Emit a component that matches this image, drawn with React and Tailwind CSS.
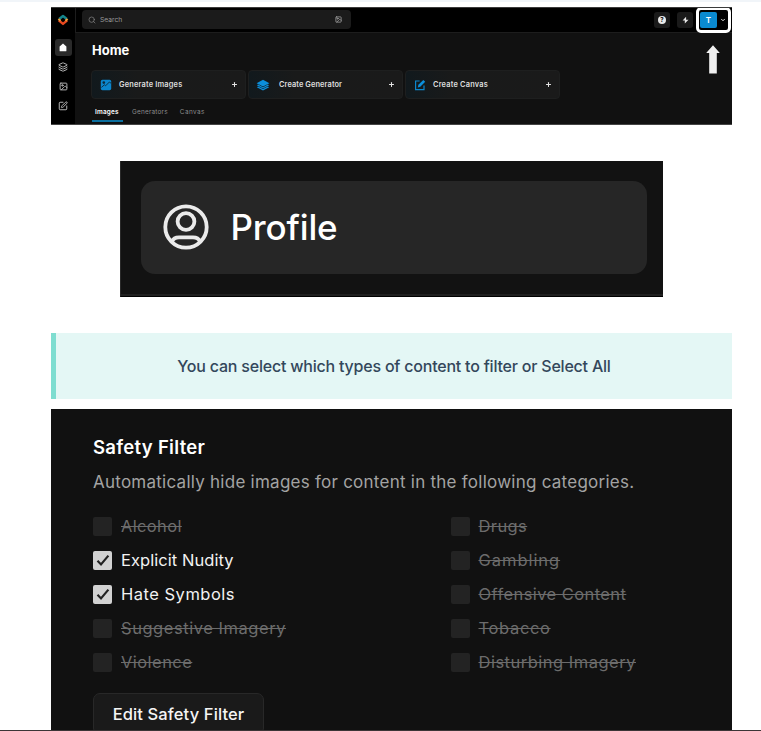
import React from 'react';
import { Search, Image, Layers, Plus, ChevronDown, SquarePen } from 'lucide-react';

const CATEGORIES = [
    [
        { label: 'Alcohol', tracking: 'tracking-[0.35px]' },
        { label: 'Explicit Nudity', checked: true, tracking: 'tracking-[0.06px]' },
        { label: 'Hate Symbols', checked: true, tracking: 'tracking-[0.5px]' },
        { label: 'Suggestive Imagery', tracking: 'tracking-[0.55px]' },
        { label: 'Violence', tracking: 'tracking-[0.45px]' },
    ],
    [
        { label: 'Drugs', tracking: 'tracking-[0.4px]' },
        { label: 'Gambling', tracking: 'tracking-[0.95px]' },
        { label: 'Offensive Content', tracking: 'tracking-[0.42px]' },
        { label: 'Tobacco', tracking: 'tracking-[0.65px]' },
        { label: 'Disturbing Imagery', tracking: 'tracking-[0.5px]' },
    ],
];

function Logo() {
    return (
        <svg width="12" height="12" viewBox="0 0 12 12" fill="none" strokeWidth="2.4" strokeLinejoin="round">
            <path d="M2.2 5 6 2l3.8 3" stroke="#14868c" />
            <path d="M1.8 6.4 6 9.9l4.2-3.5" stroke="#e8481f" />
            <path d="M1.4 4.9 3.6 6.7" stroke="#f2a03a" strokeWidth="2" />
            <path d="M10.6 4.9 8.4 6.7" stroke="#f2a03a" strokeWidth="2" />
        </svg>
    );
}

function HomeIcon() {
    return (
        <svg width="8" height="9" viewBox="0 0 8 9" fill="#fff">
            <path d="M4 .5 7.4 3.4V7.7a.5.5 0 0 1-.5.5H1.1a.5.5 0 0 1-.5-.5V3.4Z" />
        </svg>
    );
}

function ImageTile() {
    return (
        <svg width="12" height="12" viewBox="0 0 12 12">
            <rect x=".8" y=".8" width="10.4" height="10.4" rx="1.6" fill="#0b86cd" />
            <circle cx="3.8" cy="3.6" r="1.3" fill="#0f2a3a" />
            <path d="M1.4 8.4 4.4 5.8l1.2 1L9.4 3l1.6 1.2" stroke="#0f2a3a" strokeWidth=".9" fill="none" />
        </svg>
    );
}

function LayersTile() {
    return (
        <svg width="14" height="12" viewBox="0 0 14 12" fill="#0b8fdc">
            <path d="M7 .8 13.4 4.2 7 7.6.6 4.2Z" />
            <path d="M.8 6.3 2.2 5.6 7 8.2l4.8-2.6 1.4.7L7 9.6Z" />
            <path d="M.8 8.2 2.2 7.5 7 10l4.8-2.5 1.4.7L7 11.4Z" />
        </svg>
    );
}

function EditTile() {
    return (
        <svg width="12" height="12" viewBox="0 0 12 12" fill="none">
            <path d="M5.6 2H1.6v8.6h8.4V6.6" stroke="#0b86cd" strokeWidth="1.2" />
            <path d="M3.8 8.4 4.4 5.8 9.3.9l1.9 1.9-4.9 4.9Z" fill="#0b8fdc" />
        </svg>
    );
}

function ProfileIcon() {
    return (
        <svg className="-mt-[2px]" width="46" height="46" viewBox="0 0 46 46" fill="none" stroke="#ebebeb" strokeWidth="3.8">
            <circle cx="23" cy="23" r="20.7" />
            <circle cx="23" cy="17.5" r="8.4" />
            <path d="M9 37.5c1.2-3 3.6-4.1 7-4.1h14c3.4 0 5.8 1.1 7 4.1" />
        </svg>
    );
}

function ActionCard({ icon, label, spacing }) {
    return (
        <div className="flex h-[29px] w-[155px] items-center rounded-[4px] border border-[#1e1f1f] bg-linear-to-r from-[#11191d] via-[#191a1a] via-30% to-[#1a1a1a] pr-[7px] pl-[7px]">
            <div className="flex w-[14px] justify-center">{icon}</div>
            <span className={`flex-1 text-[7.4px] leading-none font-semibold whitespace-nowrap text-[#dedede] ${spacing}`}>{label}</span>
            <Plus size={7} strokeWidth={3.5} color="#e5e5e5" />
        </div>
    );
}

function Dashboard() {
    return (
        <div className="flex h-[118px] w-[681px] overflow-hidden border-t border-b border-t-[#3b3b3b] border-b-[#444] bg-[#111]">
            <aside className="flex w-6 flex-col items-center bg-black">
                <div className="flex h-[23px] items-center">
                    <Logo />
                </div>
                <div className="mt-[8px] flex h-[17px] w-[17px] items-center justify-center rounded-[3px] bg-[#2a2a2a]">
                    <HomeIcon />
                </div>
                <Layers className="mt-[6px]" size={10} strokeWidth={2.4} color="#b5b5b5" />
                <Image className="mt-[10px]" size={9} strokeWidth={2.6} color="#b5b5b5" />
                <SquarePen className="mt-[10px]" size={10} strokeWidth={2.4} color="#b5b5b5" />
            </aside>

            <div className="flex flex-1 flex-col">
                <header className="flex h-[25px] items-start border-b border-l border-[#1d1d1d] bg-black pt-[2px] pl-[6px]">
                    <div className="flex h-[19px] w-[269px] items-center rounded-[4px] bg-[#1b1b1b] pr-[9px] pl-[6px]">
                        <Search size={8} color="#8a8a8a" />
                        <span className="ml-1 flex-1 text-[6.7px] leading-[8px] text-[#989898]">Search</span>
                        <Image size={7} strokeWidth={2.6} color="#a5a5a5" />
                    </div>
                    <div className="mt-[2px] ml-auto flex h-4 w-4 items-center justify-center rounded-[3px] bg-[#1a1a1a]">
                        <span className="flex h-2 w-2 items-center justify-center rounded-full bg-[#e8e8e8] text-[6px] leading-none font-bold text-black">?</span>
                    </div>
                    <div className="mt-[2px] ml-[7px] flex h-4 w-4 items-center justify-center rounded-[3px] bg-[#1a1a1a]">
                        <svg width="7" height="8" viewBox="0 0 7 8" fill="#e8e8e8">
                            <path d="M4.1.8.6 4.6h2.2v2.8L6.5 3.7H4.1Z" />
                        </svg>
                    </div>
                    <div className="relative -mt-[3px] mr-px ml-[3px] flex h-[26px] w-[35px] shrink-0 items-center rounded-[5px] border-[3px] border-white bg-black pl-px">
                        <div className="flex h-4 w-[17px] items-center justify-center rounded-[2px] bg-[#0a8ad0] text-[8px] leading-none font-semibold text-white">T</div>
                        <ChevronDown className="ml-[3px]" size={6} strokeWidth={3.5} color="#fff" />
                    </div>
                </header>

                <main className="flex flex-1 justify-between pl-4">
                    <div>
                        <h1 className="mt-[9px] ml-px text-[13px] leading-4 font-bold text-white">Home</h1>
                        <div className="mt-[12px] flex gap-[2px]">
                            <ActionCard icon={<ImageTile />} label="Generate Images" spacing="ml-[6px] tracking-[0.18px]" />
                            <ActionCard icon={<LayersTile />} label="Create Generator" spacing="ml-[9px] tracking-[0.1px]" />
                            <ActionCard icon={<EditTile />} label="Create Canvas" spacing="ml-[6px] tracking-[0.2px]" />
                        </div>
                        <nav className="mt-[5px] flex h-[18px] gap-[9px] text-[6.4px] leading-[16px] tracking-[0.22px] text-[#8c8c8c]">
                            <span className="ml-px w-[31px] border-b-2 border-[#0a6f9f] pl-[3px] font-semibold text-white">Images</span>
                            <span>Generators</span>
                            <span className="ml-[3px] tracking-[0.4px]">Canvas</span>
                        </nav>
                    </div>
                    <svg className="mt-[12px] mr-[12px]" width="14" height="30" viewBox="0 0 14 30" fill="#f0f0f0">
                        <path d="M7 .3 13.8 8H10.8V28.6H3.2V8H.2Z" />
                    </svg>
                </main>
            </div>
        </div>
    );
}

function ProfilePanel() {
    return (
        <div className="mt-9 h-[136px] w-[543px] border-b border-l border-b-black border-l-[#2a2a2a] bg-[#121212]">
            <div className="h-[135px] border-b-2 border-[#202020] pt-5 pl-5">
                <div className="flex h-[93px] w-[506px] items-center rounded-[14px] bg-[#262626] pl-[22px]">
                    <ProfileIcon />
                    <span className="ml-[21.5px] text-[35px] leading-none font-medium tracking-[-0.15px] text-white">Profile</span>
                </div>
            </div>
        </div>
    );
}

function Category({ label, checked, tracking }) {
    return (
        <div className="flex h-[34px] items-center">
            <span className={`flex h-[19px] w-[19px] items-center justify-center rounded-[2px] ${checked ? 'bg-[#d2d2d2]' : 'bg-[#232323]'}`}>
                {checked && (
                    <svg width="14" height="14" viewBox="0 0 14 14" fill="none" stroke="#222" strokeWidth="2.2">
                        <path d="M1.5 7.8 5 11.4 12.4 2.6" />
                    </svg>
                )}
            </span>
            <span className={`ml-[9px] text-[16.5px] leading-none whitespace-nowrap ${tracking} ${checked ? 'text-[#f2f2f2]' : 'text-[#6c6c6c] line-through'}`}>
                {label}
            </span>
        </div>
    );
}

function SafetyFilter() {
    return (
        <section className="mt-[10px] h-[321px] w-[681px] overflow-hidden bg-[#111] pl-[42px]">
            <h2 className="mt-[26px] text-[18.5px] leading-6 font-semibold tracking-[0.3px] text-white">Safety Filter</h2>
            <p className="mt-[11px] text-[17px] leading-6 tracking-[0.25px] whitespace-nowrap text-[#a3a3a3]">
                Automatically hide images for content in the following categories.
            </p>
            <div className="mt-[15px] flex">
                {CATEGORIES.map((column, i) => (
                    <div key={i} className="w-[357.5px] shrink-0">
                        {column.map((item) => (
                            <Category key={item.label} {...item} />
                        ))}
                    </div>
                ))}
            </div>
            <button className="mt-[14px] block h-[42px] w-[171px] rounded-[7px] border border-[#282828] bg-[#1a1a1a] text-[16.5px] leading-none font-medium tracking-[0.12px] whitespace-nowrap text-[#f5f5f5]">
                Edit Safety Filter
            </button>
        </section>
    );
}

export default function App() {
    return (
        <div className="flex h-[731px] w-[761px] flex-col overflow-hidden border-t-2 border-b border-t-[#f1f5f9] border-b-[#3b3536] bg-white pt-[5px] pl-[51px] font-['Inter',sans-serif]">
            <div className="flex w-[681px] flex-col items-center">
                <Dashboard />
                <ProfilePanel />
                <div className="mt-9 flex h-[66px] w-[681px] items-center justify-center border-l-[5px] border-[#7eddd0] bg-[#e4f7f5] text-[16px] leading-none font-medium tracking-[-0.21px] text-[#33475b]">
                    You can select which types of content to filter or Select All
                </div>
                <SafetyFilter />
            </div>
        </div>
    );
}
